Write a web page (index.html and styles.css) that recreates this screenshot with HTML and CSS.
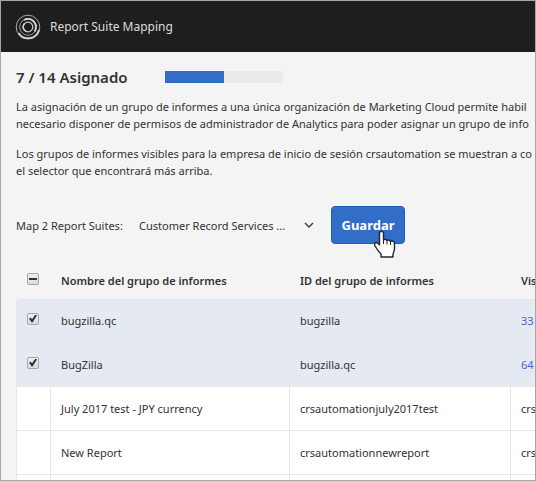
FILE: index.html
```
<!DOCTYPE html>
<html lang="es">
<head>
<meta charset="utf-8">
<title>Report Suite Mapping</title>
<link rel="stylesheet" href="styles.css">
</head>
<body>
<div class="app">
  <header class="topbar">
    <svg class="logo" viewBox="0 0 26 26" aria-hidden="true" fill="none" stroke="#d2d2d2">
      <circle cx="13" cy="13" r="11.8" stroke-width="1" stroke="#aaa"/>
      <path d="M3.500 19A11.300 11.300 0 0 0 24 16" stroke-width="2"/>
      <circle cx="13" cy="13" r="8.300" stroke-width="1" stroke="#999"/>
      <path d="M9 6A8 8 0 0 1 19.500 17.500" stroke-width="2"/>
      <circle cx="13" cy="13" r="4.800" stroke-width="1.200"/>
      <path d="M9.500 9.500A4.800 4.800 0 0 0 11 17.300" stroke-width="1.600"/>
    </svg>
    <span>Report Suite Mapping</span>
  </header>
  <main class="content">
    <div class="status">
      <h1>7 / 14 Asignado</h1>
      <div class="bar" role="progressbar" aria-label="Asignado" aria-valuemin="0" aria-valuemax="14" aria-valuenow="7"><div class="fill" style="width:50%"></div></div>
    </div>
    <p>La asignación de un grupo de informes a una única organización de Marketing Cloud permite habil<br>necesario disponer de permisos de administrador de Analytics para poder asignar un grupo de info</p>
    <p>Los grupos de informes visibles para la empresa de inicio de sesión crsautomation se muestran a co<br>el selector que encontrará más arriba.</p>
    <form class="mapping">
      <label for="org">Map 2 Report Suites:</label>
      <div class="picker">
        <select id="org"><option>Customer Record Services ...</option></select>
        <svg viewBox="0 0 10 6" aria-hidden="true"><path d="M1 1l4 4 4-4" fill="none" stroke="#333" stroke-width="1.300"/></svg>
      </div>
      <div class="save">
        <button type="button">Guardar</button>
        <svg class="pointer" viewBox="0 0 22 28" aria-hidden="true"><path d="M5.500 2.500Q7.500 0 9.500 2.500V10Q11.500 8.500 13 10.500Q15 9 16.500 11.500Q19 10 20.500 12.500V19Q20 22 19 24V27H7V24Q4 21 1 16Q0 13 2 12.500Q4 12.500 5.500 15Z" fill="#fff" stroke="#25252f" stroke-width="1.400" stroke-linejoin="round"/><path d="M9.500 10v4M13 10.500v4M16.500 11.500v3.500" stroke="#25252f"/></svg>
      </div>
    </form>
    <table>
      <colgroup><col class="c-check"><col class="c-name"><col class="c-id"><col class="c-vis"></colgroup>
      <thead><tr><th><input type="checkbox" class="mixed" aria-label="Seleccionar todo"></th><th>Nombre del grupo de informes</th><th>ID del grupo de informes</th><th>Vis</th></tr></thead>
      <tbody>
        <tr class="selected"><td><input type="checkbox" checked aria-label="bugzilla.qc"></td><td>bugzilla.qc</td><td>bugzilla</td><td><a href="#">33</a></td></tr>
        <tr class="selected"><td><input type="checkbox" checked aria-label="BugZilla"></td><td>BugZilla</td><td>bugzilla.qc</td><td><a href="#">64</a></td></tr>
        <tr><td></td><td>July 2017 test - JPY currency</td><td>crsautomationjuly2017test</td><td>crs</td></tr>
        <tr><td></td><td>New Report</td><td>crsautomationnewreport</td><td>crs</td></tr>
        <tr><td></td><td></td><td></td><td></td></tr>
      </tbody>
    </table>
  </main>
</div>
</body>
</html>
```
FILE: styles.css
```
* { box-sizing: border-box; }

body {
  margin: 0;
  color: #323232;
  font: 11px/17px "Noto Sans", sans-serif;
}

.app {
  height: 100vh;
  overflow: hidden;
  border: 1px solid #a6a6a6;
  background: #f4f4f4;
}

.topbar {
  display: flex;
  align-items: center;
  gap: 9px;
  height: 51px;
  padding-left: 14px;
  background: #1e1e1e;
  color: #dcdcdc;
  font-size: 12px;
}

.logo { width: 26px; height: 26px; }

.content { padding: 14px 0 0 15px; }

.status {
  display: flex;
  align-items: center;
  gap: 37px;
  height: 22px;
  margin-bottom: 10px;
}

h1 {
  margin: 0;
  font-size: 15px;
  line-height: 22px;
  font-weight: 600;
}

.bar {
  width: 118px;
  height: 12px;
  background: #eaeaea;
}

.fill { height: 100%; background: #326ec8; }

p {
  margin: 0 0 13px;
  white-space: nowrap;
}

.mapping {
  display: flex;
  align-items: center;
  margin-top: 27px;
}

.mapping label { width: 123px; }

.picker {
  display: flex;
  align-items: center;
  width: 192px;
}

select {
  width: 165px;
  padding: 0;
  border: 0;
  background: none;
  appearance: none;
  color: inherit;
  font: inherit;
}

.picker svg { width: 10px; height: 6px; }

.save { position: relative; }

button {
  width: 74px;
  height: 38px;
  padding: 0;
  border: 1px solid #1e5cbd;
  border-radius: 4px;
  background: #326ec8;
  color: #fff;
  font: bold 13px "Noto Sans", sans-serif;
}

.pointer {
  position: absolute;
  left: 43px;
  top: 24px;
  width: 22px;
  height: 28px;
}

table {
  width: 100%;
  margin-top: 18px;
  border-collapse: separate;
  border-spacing: 0;
  table-layout: fixed;
}

.c-check { width: 35px; }
.c-name { width: 239px; }
.c-id { width: 221px; }

th {
  height: 37px;
  padding: 0 10px;
  text-align: left;
  font-weight: 600;
}

td {
  height: 44px;
  padding: 0 10px;
  border-right: 1px solid #e6e6e6;
  border-bottom: 1px solid #e6e6e6;
  background: #fff;
}

th:last-child,
td:last-child { padding-right: 0; border-right: 0; }

th:first-child { border-left: 1px solid transparent; }
td:first-child { border-left: 1px solid #e6e6e6; }

.selected td {
  border-color: #e6e9ee;
  background: #e4e9f2;
}

.selected:first-child td:first-child { border-top-left-radius: 4px; }

a { color: #4664dc; text-decoration: none; }

input {
  display: block;
  position: relative;
  width: 12px;
  height: 12px;
  margin: 0 0 4px;
  border: 1px solid #a6a6a6;
  border-radius: 2px;
  background: linear-gradient(#f0f0f0, #dcdcdc);
  appearance: none;
}

input::before {
  position: absolute;
  background: #333;
}

input:checked::before {
  content: "";
  inset: 1px;
  clip-path: polygon(0 52%, 20% 38%, 38% 58%, 80% 0, 100% 14%, 44% 100%, 34% 100%);
}

.mixed::before {
  content: "";
  left: 1px;
  top: 4px;
  width: 8px;
  height: 2px;
}
```
